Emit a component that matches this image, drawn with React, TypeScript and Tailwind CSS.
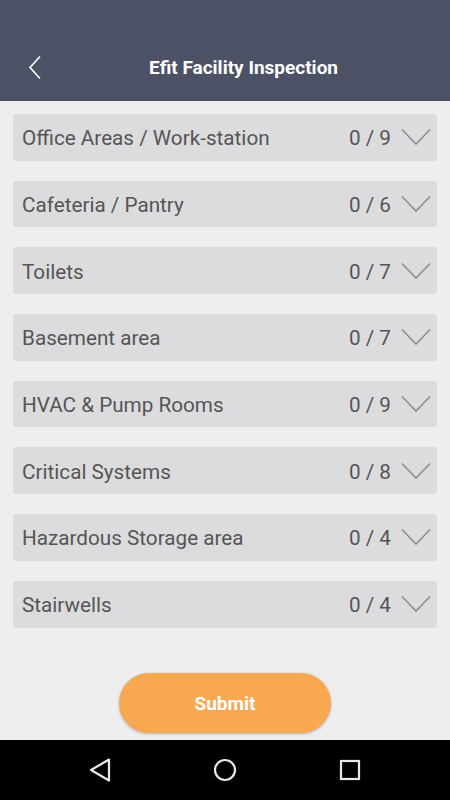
import React from "react";

const items: [string, string][] = [
  ["Office Areas / Work-station", "0 / 9"],
  ["Cafeteria / Pantry", "0 / 6"],
  ["Toilets", "0 / 7"],
  ["Basement area", "0 / 7"],
  ["HVAC & Pump Rooms", "0 / 9"],
  ["Critical Systems", "0 / 8"],
  ["Hazardous Storage area", "0 / 4"],
  ["Stairwells", "0 / 4"],
];

export default function App() {
  return (
    <div
      className="w-[450px] h-[800px] flex flex-col bg-[#eeeeee] overflow-hidden"
      style={{ fontFamily: "Roboto, 'Noto Sans', sans-serif" }}
    >
      <div className="h-[101px] bg-[#4c5165] flex items-end pb-[21px] shrink-0 relative">
        <svg className="absolute left-[27px] top-[55px]" width="16" height="25" viewBox="0 0 16 25">
          <path d="M13 1.5 L3 12.5 L13 23.5" fill="none" stroke="#ffffff" strokeWidth="1.6" />
        </svg>
        <div className="w-full pl-[37px] text-center text-white font-bold text-[19px] leading-[24px]">
          Efit Facility Inspection
        </div>
      </div>
      <div className="flex-1 flex flex-col px-[13px] pt-[13px] gap-[20px]">
        {items.map(([name, count]) => (
          <div
            key={name}
            className="h-[46.7px] rounded-[3px] bg-[#dcdcdf] flex items-center pl-[9px] pr-[6px] text-[#555555] text-[20.7px]"
          >
            <div className="flex-1 pt-[3px]">{name}</div>
            <div className="mr-[10px] pt-[3px]">{count}</div>
            <svg width="30" height="18" viewBox="0 0 30 18">
              <path d="M1 1.5 L15 16 L29 1.5" fill="none" stroke="#8f8f92" strokeWidth="1.6" />
            </svg>
          </div>
        ))}
        <div className="flex justify-center mt-[25px]">
          <button className="w-[212px] h-[60px] pt-[3px] rounded-full bg-[#f8a851] text-white font-bold text-[19px] shadow-[0_1px_3px_rgba(0,0,0,0.25)]">
            Submit
          </button>
        </div>
      </div>
      <div className="h-[60px] bg-black flex items-center shrink-0 pl-[88px]">
        <svg width="24" height="26" viewBox="0 0 24 26">
          <path d="M21 2.5 L3 13 L21 23.5 Z" fill="none" stroke="#e8e8e8" strokeWidth="2.2" strokeLinejoin="round" />
        </svg>
        <svg className="ml-[101px]" width="24" height="24" viewBox="0 0 24 24">
          <circle cx="12" cy="12" r="10" fill="none" stroke="#e8e8e8" strokeWidth="2.2" />
        </svg>
        <svg className="ml-[101px]" width="24" height="24" viewBox="0 0 24 24">
          <rect x="3" y="3" width="18" height="18" fill="none" stroke="#e8e8e8" strokeWidth="2.2" />
        </svg>
      </div>
    </div>
  );
}
